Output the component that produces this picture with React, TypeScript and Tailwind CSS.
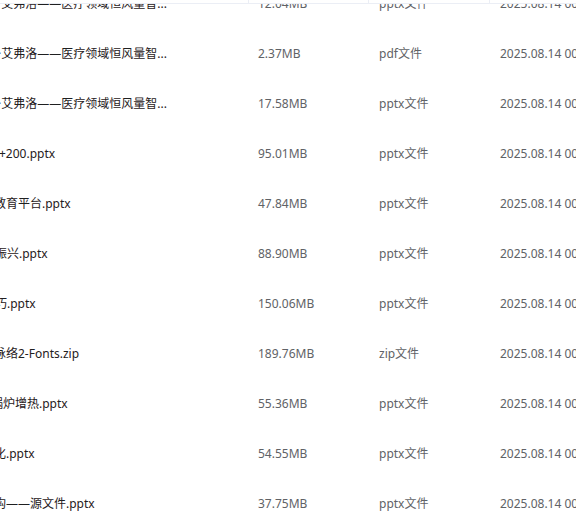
import React from "react";

type FileRow = {
  name: string;
  shift: string;
  size: string;
  type: string;
  date: string;
};

// names are cut at the left edge of the view, so each row carries its own shift
const files: FileRow[] = [
  { name: "·艾弗洛——医疗领域恒风量智...", shift: "ml-[-2px]", size: "12.04MB", type: "pptx文件", date: "2025.08.14 00:00:00" },
  { name: "·艾弗洛——医疗领域恒风量智...", shift: "ml-[-2px]", size: "2.37MB", type: "pdf文件", date: "2025.08.14 00:00:00" },
  { name: "·艾弗洛——医疗领域恒风量智...", shift: "ml-[-2px]", size: "17.58MB", type: "pptx文件", date: "2025.08.14 00:00:00" },
  { name: "+200.pptx", shift: "ml-[-1px]", size: "95.01MB", type: "pptx文件", date: "2025.08.14 00:00:00" },
  { name: "教育平台.pptx", shift: "ml-[-6px]", size: "47.84MB", type: "pptx文件", date: "2025.08.14 00:00:00" },
  { name: "振兴.pptx", shift: "ml-[-5px]", size: "88.90MB", type: "pptx文件", date: "2025.08.14 00:00:00" },
  { name: "巧.pptx", shift: "ml-[-5px]", size: "150.06MB", type: "pptx文件", date: "2025.08.14 00:00:00" },
  { name: "脉络2-Fonts.zip", shift: "ml-[-6px]", size: "189.76MB", type: "zip文件", date: "2025.08.14 00:00:00" },
  { name: "锅炉增热.pptx", shift: "ml-[-9px]", size: "55.36MB", type: "pptx文件", date: "2025.08.14 00:00:00" },
  { name: "化.pptx", shift: "ml-[-6px]", size: "54.55MB", type: "pptx文件", date: "2025.08.14 00:00:00" },
  { name: "构——源文件.pptx", shift: "ml-[-6px]", size: "37.75MB", type: "pptx文件", date: "2025.08.14 00:00:00" },
];

export default function App() {
  return (
    <div className="w-[576px] h-[528px] overflow-hidden bg-white text-[12px] font-['Noto_Sans','Noto_Sans_CJK_SC',sans-serif]">
      {/* header, scrolled so only its bottom edge shows */}
      <div className="flex h-[4px] border-b border-[#ebeef5] bg-white">
        <div className="w-[249px] shrink-0 border-r border-[#ebeef5]" />
        <div className="w-[120px] shrink-0 border-r border-[#ebeef5]" />
        <div className="w-[121px] shrink-0 border-r border-[#ebeef5]" />
        <div className="flex-1" />
      </div>
      <div className="h-[524px] overflow-hidden">
        <div className="-mt-[25px]">
          {files.map((f, i) => (
            <div key={i} className="flex h-[50px] items-center whitespace-nowrap">
              <div className="w-[249px] shrink-0 overflow-hidden text-[#1f2021]">
                <span className={`block ${f.shift}`}>{f.name}</span>
              </div>
              <div className="w-[120px] shrink-0 pl-[9px] text-[#606266]">{f.size}</div>
              <div className="w-[121px] shrink-0 pl-[10px] text-[#606266]">{f.type}</div>
              <div className="flex-1 pl-[10px] text-[#606266]">{f.date}</div>
            </div>
          ))}
        </div>
      </div>
    </div>
  );
}
